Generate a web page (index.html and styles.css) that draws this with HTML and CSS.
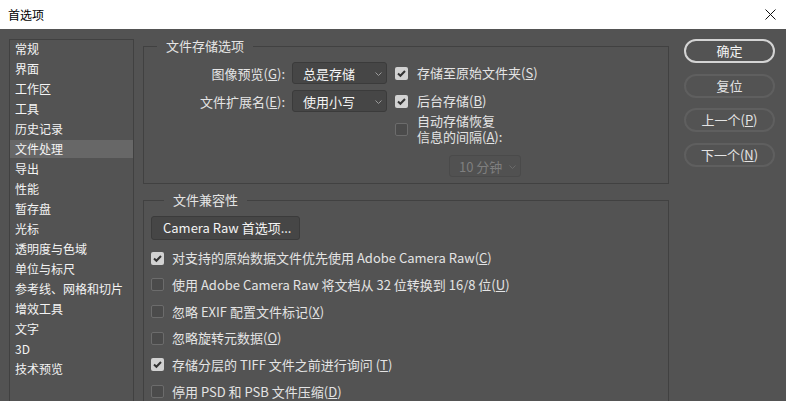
FILE: index.html
```html
<!DOCTYPE html>
<html>
<head>
    <meta charset="utf-8">
    <title>首选项</title>
    <link rel="stylesheet" href="styles.css">
</head>
<body>
    <header class="titlebar">
        <span class="title">首选项</span>
        <svg class="close" width="11" height="11" viewBox="0 0 11 11">
            <path d="M0.5 0.5L10.5 10.5M10.5 0.5L0.5 10.5" stroke="#111" stroke-width="1" fill="none"/>
        </svg>
    </header>

    <div class="dialog">
        <ul class="nav">
            <li>常规</li>
            <li>界面</li>
            <li>工作区</li>
            <li>工具</li>
            <li>历史记录</li>
            <li class="active">文件处理</li>
            <li>导出</li>
            <li>性能</li>
            <li>暂存盘</li>
            <li>光标</li>
            <li>透明度与色域</li>
            <li>单位与标尺</li>
            <li>参考线、网格和切片</li>
            <li>增效工具</li>
            <li>文字</li>
            <li>3D</li>
            <li>技术预览</li>
        </ul>

        <div class="content">
            <fieldset class="group group-save">
                <legend>文件存储选项</legend>
                <div class="row">
                    <span class="field-label">图像预览(<u>G</u>):</span>
                    <div class="select">
                        <span>总是存储</span>
                        <svg width="7" height="4" viewBox="0 0 7 4"><path d="M0.5 0.5L3.5 3.5L6.5 0.5" stroke="#9a9a9a" fill="none"/></svg>
                    </div>
                    <span class="check checked">
                        <svg width="13" height="13" viewBox="0 0 13 13"><path d="M3 6.5L5.4 8.8L10 4" stroke="#333" stroke-width="2" fill="none"/></svg>
                    </span>
                    <span class="check-label">存储至原始文件夹(<u>S</u>)</span>
                </div>
                <div class="row">
                    <span class="field-label">文件扩展名(<u>E</u>):</span>
                    <div class="select">
                        <span>使用小写</span>
                        <svg width="7" height="4" viewBox="0 0 7 4"><path d="M0.5 0.5L3.5 3.5L6.5 0.5" stroke="#9a9a9a" fill="none"/></svg>
                    </div>
                    <span class="check checked">
                        <svg width="13" height="13" viewBox="0 0 13 13"><path d="M3 6.5L5.4 8.8L10 4" stroke="#333" stroke-width="2" fill="none"/></svg>
                    </span>
                    <span class="check-label">后台存储(<u>B</u>)</span>
                </div>
                <div class="row row-auto">
                    <span class="check"></span>
                    <span class="check-label multi">自动存储恢复<br>信息的间隔(<u>A</u>):</span>
                </div>
                <div class="row row-interval">
                    <div class="select disabled">
                        <span>10 分钟</span>
                        <svg width="7" height="4" viewBox="0 0 7 4"><path d="M0.5 0.5L3.5 3.5L6.5 0.5" stroke="#6a6a6a" fill="none"/></svg>
                    </div>
                </div>
            </fieldset>

            <fieldset class="group group-compat">
                <legend>文件兼容性</legend>
                <div class="btn-raw">Camera Raw 首选项...</div>
                <div class="options">
                    <div class="option">
                        <span class="check checked">
                            <svg width="13" height="13" viewBox="0 0 13 13"><path d="M3 6.5L5.4 8.8L10 4" stroke="#333" stroke-width="2" fill="none"/></svg>
                        </span>
                        <span class="check-label">对支持的原始数据文件优先使用 Adobe Camera Raw(<u>C</u>)</span>
                    </div>
                    <div class="option">
                        <span class="check"></span>
                        <span class="check-label">使用 Adobe Camera Raw 将文档从 32 位转换到 16/8 位(<u>U</u>)</span>
                    </div>
                    <div class="option">
                        <span class="check"></span>
                        <span class="check-label">忽略 EXIF 配置文件标记(<u>X</u>)</span>
                    </div>
                    <div class="option">
                        <span class="check"></span>
                        <span class="check-label">忽略旋转元数据(<u>O</u>)</span>
                    </div>
                    <div class="option">
                        <span class="check checked">
                            <svg width="13" height="13" viewBox="0 0 13 13"><path d="M3 6.5L5.4 8.8L10 4" stroke="#333" stroke-width="2" fill="none"/></svg>
                        </span>
                        <span class="check-label">存储分层的 TIFF 文件之前进行询问 (<u>T</u>)</span>
                    </div>
                    <div class="option">
                        <span class="check"></span>
                        <span class="check-label">停用 PSD 和 PSB 文件压缩(<u>D</u>)</span>
                    </div>
                </div>
            </fieldset>
        </div>

        <div class="actions">
            <div class="btn primary">确定</div>
            <div class="btn">复位</div>
            <div class="btn">上一个(<u>P</u>)</div>
            <div class="btn">下一个(<u>N</u>)</div>
        </div>
    </div>
</body>
</html>
```

FILE: styles.css
```css
:root {
    --panel: #535353;
    --border: #414141;
    --text: #e4e4e4;
    --text-bright: #f4f4f4;
    --field-bg: #464646;
    --field-border: #3b3b3b;
}

* {
    margin: 0;
    padding: 0;
    box-sizing: border-box;
}

html, body {
    height: 100%;
    overflow: hidden;
}

body {
    font-family: "Noto Sans CJK SC", "Noto Sans", sans-serif;
    font-size: 13px;
    color: var(--text);
    background-color: var(--panel);
}

u {
    text-decoration: underline;
    text-underline-offset: 1px;
}

/* title bar */

.titlebar {
    height: 29px;
    background: #fff;
    display: flex;
    align-items: center;
    justify-content: space-between;
    padding: 0 10px 0 8px;
}

.title {
    color: #000;
    font-size: 12px;
    line-height: 16px;
}

.close {
    display: block;
    margin-top: -1px;
}

/* body of the dialog */

.dialog {
    display: flex;
    align-items: flex-start;
    padding: 10px 0 0 9px;
}

.nav {
    list-style: none;
    width: 125px;
    height: 400px;
    border: 1px solid var(--border);
    font-size: 12px;
    color: var(--text-bright);
    flex-shrink: 0;
}

.nav li {
    height: 18px;
    line-height: 18px;
    margin-bottom: 2px;
    padding-left: 5px;
    white-space: nowrap;
}

.nav li.active {
    background-color: #676767;
}

.content {
    width: 526px;
    margin-left: 9px;
    flex-shrink: 0;
}

.group {
    border: 1px solid var(--border);
    min-width: 0;
}

.group legend {
    margin-left: 13px;
    padding: 0 9px;
    font-size: 13px;
    line-height: 14px;
    color: var(--text);
}

/* save options */

.group-save {
    height: 145px;
    padding: 9px 0 0 0;
}

.row {
    display: flex;
    align-items: center;
    height: 22px;
    margin-bottom: 6px;
}

.field-label {
    width: 148px;
    padding-right: 7px;
    text-align: right;
    white-space: nowrap;
}

.select {
    width: 95px;
    height: 22px;
    display: flex;
    align-items: center;
    justify-content: space-between;
    padding: 0 4px 0 10px;
    background-color: var(--field-bg);
    border: 1px solid var(--field-border);
    border-radius: 3px;
    color: var(--text-bright);
}

.select svg {
    margin-top: 2px;
}

.select.disabled {
    width: 72px;
    padding-left: 9px;
    background-color: #515151;
    border-color: #4a4a4a;
    color: #7f7f7f;
}

.row .check {
    margin-left: 8px;
}

.row-auto {
    height: 32px;
    margin-top: -5px;
    margin-left: 243px;
    margin-bottom: 10px;
}

.row-interval {
    margin-left: 305px;
}

.check {
    width: 13px;
    height: 13px;
    flex-shrink: 0;
    border: 1px solid #6c6c6c;
    border-radius: 2px;
    background-color: #4b4b4b;
}

.check.checked {
    border: none;
    background-color: #d2d2d2;
}

.check svg {
    display: block;
}

.check-label {
    margin-left: 9px;
    white-space: nowrap;
    line-height: 16px;
}

/* compatibility */

.group-compat {
    margin-top: 9px;
    height: 240px;
    padding: 9px 7px 0;
}

.btn-raw {
    width: 149px;
    height: 24px;
    line-height: 22px;
    padding-left: 11px;
    background-color: var(--field-bg);
    border: 1px solid var(--field-border);
    border-radius: 3px;
    color: var(--text-bright);
    white-space: nowrap;
}

.options {
    margin-top: 5px;
}

.option {
    display: flex;
    align-items: center;
    height: 26.67px;
}

.option .check-label {
    margin-left: 8px;
}

/* right-hand buttons */

.actions {
    width: 91px;
    margin-left: 15px;
    display: flex;
    flex-direction: column;
    gap: 10.5px;
}

.btn {
    height: 24px;
    line-height: 20px;
    border: 2px solid #5f5f5f;
    border-radius: 12px;
    text-align: center;
    color: var(--text);
}

.btn.primary {
    border-color: #d4d4d4;
    color: var(--text-bright);
}
```
